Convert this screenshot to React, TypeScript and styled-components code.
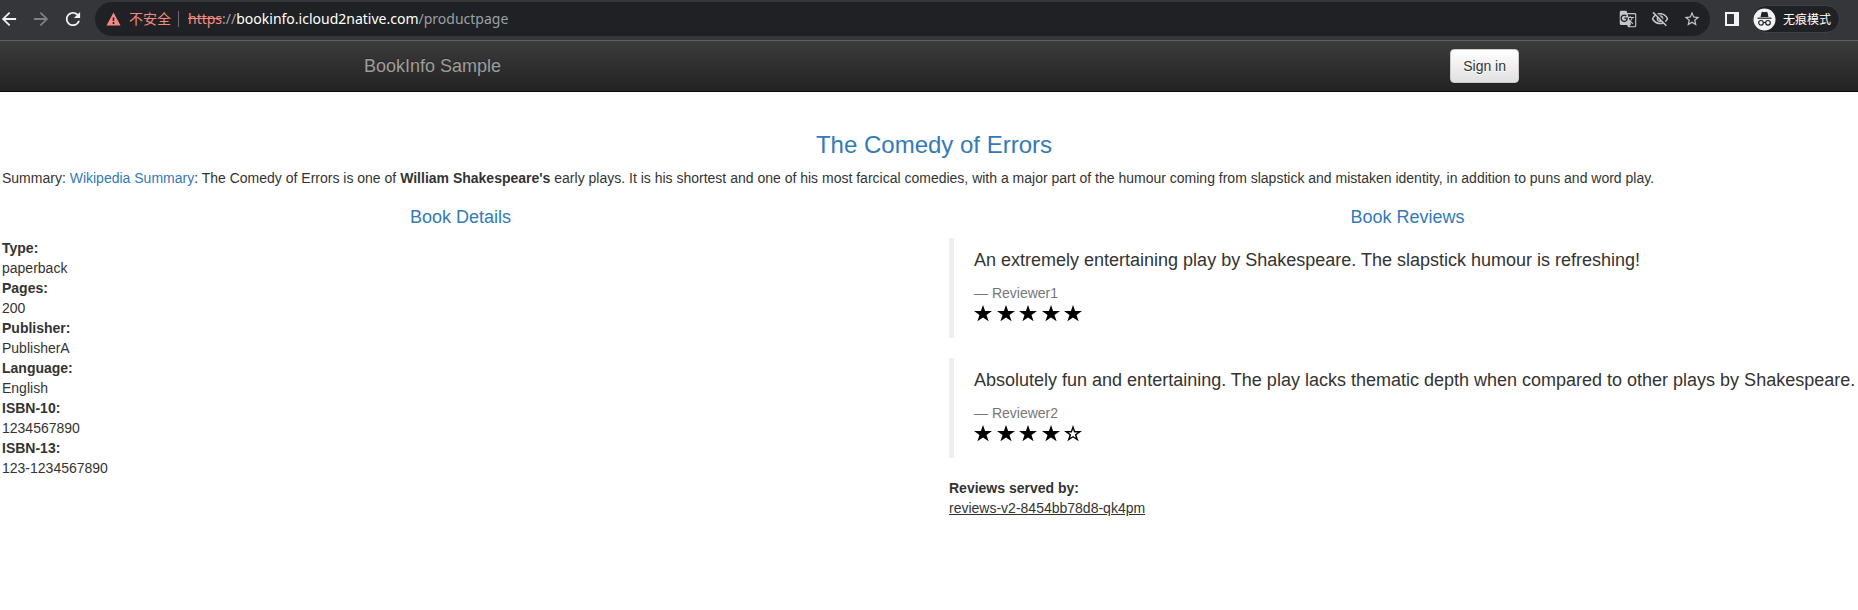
import React from 'react';
import styled, { createGlobalStyle } from 'styled-components';
import {
  MdArrowBack,
  MdArrowForward,
  MdGTranslate,
  MdOutlineVisibilityOff,
  MdRefresh,
  MdStarBorder,
} from 'react-icons/md';

const GlobalStyle = createGlobalStyle`
  *, *::before, *::after { box-sizing: border-box; }
  body {
    margin: 0;
    background: #fff;
    color: #333;
    font: 14px/20px "Liberation Sans", Arial, sans-serif;
  }
  a { color: #337ab7; text-decoration: none; }
`;

const BrowserBar = styled.header`
  display: flex;
  align-items: center;
  padding: 2px 18px 4px 1px;
  background: #35363a;
  border-bottom: 1px solid #5f6061;
  font-family: "Noto Sans", "Noto Sans CJK SC", sans-serif;
`;

const ToolGroup = styled.div<{ $gap: number }>`
  display: flex;
  align-items: center;
  gap: ${(p) => p.$gap}px;
`;

const ToolButton = styled.button<{ $color?: string }>`
  display: flex;
  align-items: center;
  justify-content: center;
  padding: 0;
  border: 0;
  background: none;
  color: ${(p) => p.$color ?? '#f1f3f4'};
`;

const AddressBar = styled.div`
  display: flex;
  align-items: center;
  flex: 1;
  height: 34px;
  margin: 0 13px 0 14px;
  padding: 0 9px 0 11px;
  border-radius: 17px;
  background: #202124;
`;

const Warning = styled.span`
  display: flex;
  align-items: center;
  gap: 8px;
  margin-right: 9px;
  padding-right: 7px;
  border-right: 1px solid #6b6d70;
  color: #f28b82;
  font-size: 14px;
  line-height: 16px;
`;

const Url = styled.span`
  flex: 1;
  color: #9aa0a6;
  font-size: 14px;
  line-height: 20px;

  s { color: #f28b82; }
  b { color: #fff; font-weight: 400; }
`;

const Incognito = styled.button`
  display: flex;
  align-items: center;
  gap: 7px;
  height: 28px;
  margin-left: 11px;
  padding: 0 8px 0 0;
  border: 1px solid #3f4044;
  border-radius: 14px;
  background: #202124;
  color: #fff;
  font: 12px/16px "Noto Sans CJK SC", sans-serif;
`;

const Navbar = styled.nav`
  padding: 0 6px 0 16px;
  background: linear-gradient(#3c3c3c, #222);
  border-bottom: 1px solid #080808;
`;

const NavInner = styled.div`
  display: flex;
  align-items: center;
  justify-content: space-between;
  max-width: 1170px;
  height: 50px;
  margin: 0 auto;
`;

const Brand = styled.a`
  && { color: #9d9d9d; }
  padding: 15px;
  font-size: 18px;
  line-height: 20px;
  text-shadow: 0 -1px 0 rgba(0, 0, 0, 0.25);
`;

const SignIn = styled.button`
  height: 34px;
  padding: 0 12px;
  border: 1px solid #ccc;
  border-radius: 4px;
  background: linear-gradient(#fff, #e0e0e0);
  box-shadow: inset 0 1px 0 rgba(255, 255, 255, 0.15), 0 1px 1px rgba(0, 0, 0, 0.08);
  color: #333;
  font: inherit;
  text-shadow: 0 1px 0 #fff;
`;

const Page = styled.main`
  overflow: hidden;
  padding: 20px 0;
`;

const Row = styled.div`
  display: flex;
  margin: 0 -23px 0 -13px;
`;

const Column = styled.section`
  flex: 1 1 0;
  min-width: 0;
  padding: 0 15px;
`;

const Title = styled.h3`
  margin: 20px 0 10px;
  color: #337ab7;
  font-size: 24px;
  font-weight: 500;
  line-height: 26px;
  text-align: center;
`;

const Subtitle = styled.h4`
  margin: 10px 0 12px;
  color: #337ab7;
  font-size: 18px;
  font-weight: 500;
  line-height: 18px;
  text-align: center;
`;

const Summary = styled.p`
  margin: 0 0 10px;
`;

const Details = styled.dl`
  margin: 0;
  dt { font-weight: 700; }
  dd { margin: 0; }
`;

const ServedBy = styled(Details)`
  dd { text-decoration: underline; }
`;

const Review = styled.blockquote`
  margin: 0 0 20px;
  padding: 10px 0 10px 20px;
  border-left: 5px solid #eee;

  p {
    margin: 0 0 10px;
    font-size: 18px;
    line-height: 25px;
  }
  small {
    display: block;
    color: #777;
    font-size: 14px;
    line-height: 20px;
  }
`;

const Stars = styled.div`
  display: flex;
  justify-content: space-between;
  width: 108px;
  height: 25px;
  padding-top: 2px;
`;

const Star = ({ filled }: { filled: boolean }) => (
  <svg width="18" height="17" viewBox="0 0 18 17" aria-hidden="true">
    <path d="M9 0l2.100 6.100H18l-5.500 3.800 2.100 6.300L9 12.400l-5.600 3.800 2.100-6.300L0 6.100h6.900z" fill="#000" />
    {!filled && (
      <path d="M9 4.300l1.100 3.300h3.500l-2.800 2 1 3.200L9 10.900l-2.800 1.900 1-3.200-2.800-2h3.500z" fill="#fff" />
    )}
  </svg>
);

const WarningIcon = () => (
  <svg width="15" height="14" viewBox="0 0 15 14" aria-hidden="true">
    <path d="M7.500 0.500L14.500 13.500H0.500z" fill="#f28b82" />
    <path d="M7.500 5.500v3.500M7.500 10v2" stroke="#202124" strokeWidth="1.600" />
  </svg>
);

const SidePanelIcon = () => (
  <svg width="18" height="18" viewBox="0 0 18 18" aria-hidden="true">
    <path d="M2 2h14v14H2zM4 4v10h7V4z" fill="currentColor" fillRule="evenodd" />
  </svg>
);

const IncognitoIcon = () => (
  <svg width="23" height="23" viewBox="0 0 23 23" aria-hidden="true">
    <circle cx="11.5" cy="11.500" r="11" fill="#f1f3f4" />
    <path d="M8.500 4.500l1-0.700 2 0.500 2-0.500 1 0.700 1 4.500H7.500z" fill="#202124" />
    <path d="M4.500 10.200h14" stroke="#202124" strokeWidth="1.200" />
    <g fill="none" stroke="#202124" strokeWidth="1.200">
      <circle cx="8" cy="14.800" r="2.300" />
      <circle cx="15" cy="14.800" r="2.300" />
      <path d="M10.300 14.500h2.400" />
    </g>
  </svg>
);

const details = [
  ['Type:', 'paperback'],
  ['Pages:', '200'],
  ['Publisher:', 'PublisherA'],
  ['Language:', 'English'],
  ['ISBN-10:', '1234567890'],
  ['ISBN-13:', '123-1234567890'],
];

const reviews = [
  {
    text: 'An extremely entertaining play by Shakespeare. The slapstick humour is refreshing!',
    by: 'Reviewer1',
    stars: 5,
  },
  {
    text: 'Absolutely fun and entertaining. The play lacks thematic depth when compared to other plays by Shakespeare.',
    by: 'Reviewer2',
    stars: 4,
  },
];

export default function App() {
  return (
    <>
      <GlobalStyle />
      <BrowserBar>
        <ToolGroup $gap={16}>
          <ToolButton aria-label="Back">
            <MdArrowBack size={16} viewBox="3 3 18 18" />
          </ToolButton>
          <ToolButton $color="#7f8184" aria-label="Forward">
            <MdArrowForward size={16} viewBox="3 3 18 18" />
          </ToolButton>
          <ToolButton aria-label="Reload">
            <MdRefresh size={16} viewBox="3 3 18 18" />
          </ToolButton>
        </ToolGroup>
        <AddressBar>
          <Warning>
            <WarningIcon />
            不安全
          </Warning>
          <Url>
            <s>https</s>://<b>bookinfo.icloud2native.com</b>/productpage
          </Url>
          <ToolGroup $gap={14}>
            <ToolButton $color="#c4c7ca" aria-label="Translate">
              <MdGTranslate size={18} viewBox="0 0 24 24" />
            </ToolButton>
            <ToolButton $color="#c4c7ca" aria-label="Third-party cookies blocked">
              <MdOutlineVisibilityOff size={18} viewBox="0 0 24 24" />
            </ToolButton>
            <ToolButton $color="#c4c7ca" aria-label="Bookmark">
              <MdStarBorder size={18} viewBox="0 0 24 24" />
            </ToolButton>
          </ToolGroup>
        </AddressBar>
        <ToolButton aria-label="Side panel">
          <SidePanelIcon />
        </ToolButton>
        <Incognito>
          <IncognitoIcon />
          无痕模式
        </Incognito>
      </BrowserBar>
      <Navbar>
        <NavInner>
          <Brand href="#">BookInfo Sample</Brand>
          <SignIn type="button">Sign in</SignIn>
        </NavInner>
      </Navbar>
      <Page>
        <Row>
          <Column>
            <Title>The Comedy of Errors</Title>
            <Summary>
              Summary: <a href="#">Wikipedia Summary</a>: The Comedy of Errors is one of{' '}
              <b>William Shakespeare's</b> early plays. It is his shortest and one of his most farcical
              comedies, with a major part of the humour coming from slapstick and mistaken identity, in
              addition to puns and word play.
            </Summary>
          </Column>
        </Row>
        <Row>
          <Column>
            <Subtitle>Book Details</Subtitle>
            <Details>
              {details.map(([name, value]) => (
                <React.Fragment key={name}>
                  <dt>{name}</dt>
                  <dd>{value}</dd>
                </React.Fragment>
              ))}
            </Details>
          </Column>
          <Column>
            <Subtitle>Book Reviews</Subtitle>
            {reviews.map((review) => (
              <Review key={review.by}>
                <p>{review.text}</p>
                <small>— {review.by}</small>
                <Stars role="img" aria-label={`${review.stars} of 5 stars`}>
                  {[1, 2, 3, 4, 5].map((n) => (
                    <Star key={n} filled={n <= review.stars} />
                  ))}
                </Stars>
              </Review>
            ))}
            <ServedBy>
              <dt>Reviews served by:</dt>
              <dd>reviews-v2-8454bb78d8-qk4pm</dd>
            </ServedBy>
          </Column>
        </Row>
      </Page>
    </>
  );
}
